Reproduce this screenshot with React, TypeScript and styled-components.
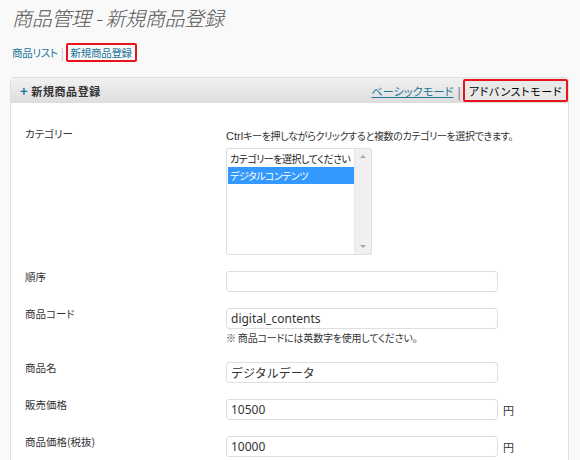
import styled, { createGlobalStyle } from 'styled-components';

const GlobalStyle = createGlobalStyle`
  html, body {
    margin: 0;
    background: #f9f9f9;
  }
  body {
    font-family: "Noto Sans CJK JP", sans-serif;
    font-feature-settings: "palt" 1;
    color: #333;
  }
  * { box-sizing: border-box; }
`;

const Page = styled.div`
  width: 580px;
  padding: 4px 11px 0 10px;
  overflow: hidden;
`;

const Title = styled.h2`
  margin: 0 0 0 2px;
  font-size: 20px;
  line-height: 28px;
  font-weight: 300;
  font-style: italic;
  letter-spacing: -0.3px;
  color: #555;
`;

const SubNav = styled.div`
  display: flex;
  align-items: center;
  margin: 11px 0 0 2px;
  height: 19px;
  font-size: 10.5px;
  letter-spacing: -0.3px;
`;

const NavLink = styled.a`
  color: #21759b;
  text-decoration: none;
`;

const Sep = styled.span`
  color: #c8c0c8;
  margin: 0 2px 0 3px;
  font-size: 12px;
`;

const Marked = styled.span`
  display: flex;
  align-items: center;
  border: 2px solid #e8141c;
  border-radius: 2px;
  height: 19px;
  padding: 0 3px;
`;

const Panel = styled.div`
  margin-top: 15px;
  border: 1px solid #dfdfdf;
  border-radius: 4px 4px 0 0;
  background: #fff;
  width: 559px;
`;

const PanelHead = styled.div`
  display: flex;
  align-items: flex-end;
  height: 25px;
  background: linear-gradient(#f1f1f1, #dedede);
  border-bottom: 1px solid #dcdcdc;
`;

const HeadTitle = styled.h3`
  margin: 0 auto 0 9px;
  align-self: center;
  font-size: 11px;
  font-weight: bold;
  color: #333;
  letter-spacing: 0.6px;
`;

const Plus = styled.span`
  color: #21759b;
  font-size: 13px;
  margin-right: 3px;
`;

const ModeLink = styled.a`
  align-self: center;
  margin-top: 2px;
  color: #21759b;
  font-size: 11px;
  letter-spacing: 0.2px;
  text-decoration: underline;
`;

const ModeSep = styled.span`
  align-self: center;
  margin: 2px 2px 0 4px;
  color: #6a5a78;
  font-size: 12px;
`;

const ModeActive = styled.span`
  display: flex;
  align-items: center;
  height: 23px;
  padding: 0 4px;
  border: 2px solid #e8141c;
  border-radius: 2px;
  background: #e9e9e9;
  color: #000;
  font-size: 11px;
  letter-spacing: 0.6px;
`;

const Body = styled.div`
  padding: 17px 0 0 14px;
`;

const Row = styled.div`
  display: grid;
  grid-template-columns: 201px 1fr;
  padding: 8px 0;
`;

const Label = styled.div`
  font-size: 10.5px;
  line-height: 12px;
  color: #333;
`;

const Field = styled.div`
  display: flex;
  flex-direction: column;
  align-items: flex-start;
`;

const Hint = styled.div<{ $top?: number; $tight?: boolean }>`
  font-size: 10px;
  line-height: 16px;
  letter-spacing: ${p => (p.$tight ? -0.35 : -0.2)}px;
  margin-top: ${p => p.$top ?? 0}px;
  color: #333;
`;

const Ctrl = styled.span`
  font-family: "Liberation Sans", sans-serif;
  font-size: 11px;
  letter-spacing: 0;
`;

const ListBox = styled.div`
  margin-top: 4px;
  width: 146px;
  height: 107px;
  border: 1px solid #dfdfdf;
  border-radius: 2px;
  display: flex;
  background: #fff;
`;

const Options = styled.div`
  flex: 1;
  min-width: 0;
  overflow: hidden;
  padding: 1px 0 0 1px;
`;

const Option = styled.div<{ $selected?: boolean }>`
  height: 17px;
  line-height: 17px;
  padding-left: 2px;
  font-size: 10px;
  letter-spacing: -0.5px;
  white-space: nowrap;
  background: ${p => (p.$selected ? '#3399ff' : 'transparent')};
  color: ${p => (p.$selected ? '#fff' : '#222')};
`;

const ScrollBar = styled.div`
  flex: 0 0 17px;
  background: #f0f0f0;
  border-left: 1px solid #e6e6e6;
  display: flex;
  flex-direction: column;
  justify-content: space-between;
  align-items: center;
  padding: 6px 0;
`;

const Arrow = styled.span<{ $down?: boolean }>`
  width: 0;
  height: 0;
  border-left: 3px solid transparent;
  border-right: 3px solid transparent;
  ${p =>
    p.$down
      ? 'border-top: 3px solid #a8a8a8;'
      : 'border-bottom: 3px solid #a8a8a8;'}
`;

const InputLine = styled.div`
  display: flex;
  align-items: center;
`;

const TextInput = styled.input`
  width: 272px;
  height: 21px;
  border: 1px solid #dfdfdf;
  border-radius: 3px;
  padding: 0 4px;
  font-family: "Noto Sans", "Noto Sans CJK JP", sans-serif;
  font-size: 12px;
  color: #333;
  background: #fff;
  outline: none;
`;

const Unit = styled.span`
  margin-left: 5px;
  font-size: 11px;
  color: #333;
`;

export default function App() {
  return (
    <>
      <GlobalStyle />
      <Page>
        <Title>商品管理 - 新規商品登録</Title>
        <SubNav>
          <NavLink href="#">商品リスト</NavLink>
          <Sep>|</Sep>
          <Marked>
            <NavLink href="#">新規商品登録</NavLink>
          </Marked>
        </SubNav>
        <Panel>
          <PanelHead>
            <HeadTitle>
              <Plus>+</Plus>新規商品登録
            </HeadTitle>
            <ModeLink href="#">ベーシックモード</ModeLink>
            <ModeSep>|</ModeSep>
            <ModeActive>アドバンストモード</ModeActive>
          </PanelHead>
          <Body>
            <Row>
              <Label>カテゴリー</Label>
              <Field>
                <Hint $tight>
                  <Ctrl>Ctrl</Ctrl>キーを押しながらクリックすると複数のカテゴリーを選択できます。
                </Hint>
                <ListBox>
                  <Options>
                    <Option>カテゴリーを選択してください</Option>
                    <Option $selected>デジタルコンテンツ</Option>
                  </Options>
                  <ScrollBar>
                    <Arrow />
                    <Arrow $down />
                  </ScrollBar>
                </ListBox>
              </Field>
            </Row>
            <Row>
              <Label>順序</Label>
              <Field>
                <TextInput defaultValue="" />
              </Field>
            </Row>
            <Row>
              <Label>商品コード</Label>
              <Field>
                <TextInput defaultValue="digital_contents" />
                <Hint $top={1}>※ 商品コードには英数字を使用してください。</Hint>
              </Field>
            </Row>
            <Row>
              <Label>商品名</Label>
              <Field>
                <TextInput defaultValue="デジタルデータ" />
              </Field>
            </Row>
            <Row>
              <Label>販売価格</Label>
              <Field>
                <InputLine>
                  <TextInput defaultValue="10500" />
                  <Unit>円</Unit>
                </InputLine>
              </Field>
            </Row>
            <Row>
              <Label>商品価格(税抜)</Label>
              <Field>
                <InputLine>
                  <TextInput defaultValue="10000" />
                  <Unit>円</Unit>
                </InputLine>
              </Field>
            </Row>
          </Body>
        </Panel>
      </Page>
    </>
  );
}
